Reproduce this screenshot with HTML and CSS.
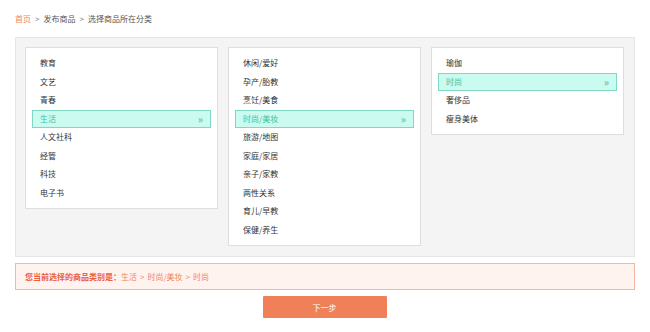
FILE: index.html
```html
<!DOCTYPE html>
<html lang="zh">
<head>
<meta charset="utf-8">
<link rel="stylesheet" href="styles.css">
</head>
<body>
<div class="page">
  <div class="crumb"><a class="home">首页</a><span class="sep">&gt;</span>发布商品<span class="sep">&gt;</span>选择商品所在分类</div>
  <div class="panel">
    <ul class="col">
      <li>教育</li>
      <li>文艺</li>
      <li>青春</li>
      <li class="on">生活<span class="arr">»</span></li>
      <li>人文社科</li>
      <li>经管</li>
      <li>科技</li>
      <li>电子书</li>
    </ul>
    <ul class="col">
      <li>休闲/爱好</li>
      <li>孕产/胎教</li>
      <li>烹饪/美食</li>
      <li class="on">时尚/美妆<span class="arr">»</span></li>
      <li>旅游/地图</li>
      <li>家庭/家居</li>
      <li>亲子/家教</li>
      <li>两性关系</li>
      <li>育儿/早教</li>
      <li>保健/养生</li>
    </ul>
    <ul class="col">
      <li>瑜伽</li>
      <li class="on">时尚<span class="arr">»</span></li>
      <li>奢侈品</li>
      <li>瘦身美体</li>
    </ul>
  </div>
  <div class="info"><b>您当前选择的商品类别是：</b>生活<span class="gt">&gt;</span>时尚/美妆<span class="gt">&gt;</span>时尚</div>
  <div class="actions"><button class="next">下一步</button></div>
</div>
</body>
</html>
```

FILE: styles.css
```css
* { box-sizing: border-box; }
html, body { margin: 0; padding: 0; background: #fff; }
body { font-family: "Noto Sans CJK SC", "Liberation Sans", sans-serif; font-size: 8px; color: #333; }
.page { width: 620px; margin-left: 15px; }
.crumb { height: 37px; padding-top: 13px; line-height: 12px; color: #555; }
.crumb .home { color: #f0845a; }
.crumb .sep { margin: 0 4px; color: #777; }
.panel {
  display: flex; align-items: flex-start; gap: 10px;
  background: #f4f4f4; border: 1px solid #e6e6e6;
  padding: 9px 9px; height: 220px;
}
.col {
  list-style: none; margin: 0; flex: 0 0 193px;
  background: #fff; border: 1px solid #dedede;
  padding: 6px 6px;
}
.col li {
  height: 18.5px; line-height: 18.5px; padding: 0 8px;
  display: flex; justify-content: space-between; color: #333;
}
.col li.on {
  background: #cbfaf0; border: 1px solid #7fd8c2; color: #3cc3a0;
  padding: 0 7px; line-height: 16.5px;
}
.arr { color: #5ccaab; font-size: 10px; font-weight: bold; }
.info {
  margin-top: 6px; height: 27px; line-height: 25px;
  background: #fff3f0; border: 1px solid #f6b6a0;
  padding: 0 9px; color: #f0845a;
}
.info b { color: #e8603c; font-weight: bold; }
.info .gt { margin: 0 3px; }
.actions { display: flex; justify-content: center; padding-top: 6px; }
.next {
  width: 124px; height: 22px; margin-left: -1px;
  background: #f08058; color: #fff; border: 0; border-radius: 1px;
  font-family: inherit; font-size: 8px; cursor: pointer;
}
```
